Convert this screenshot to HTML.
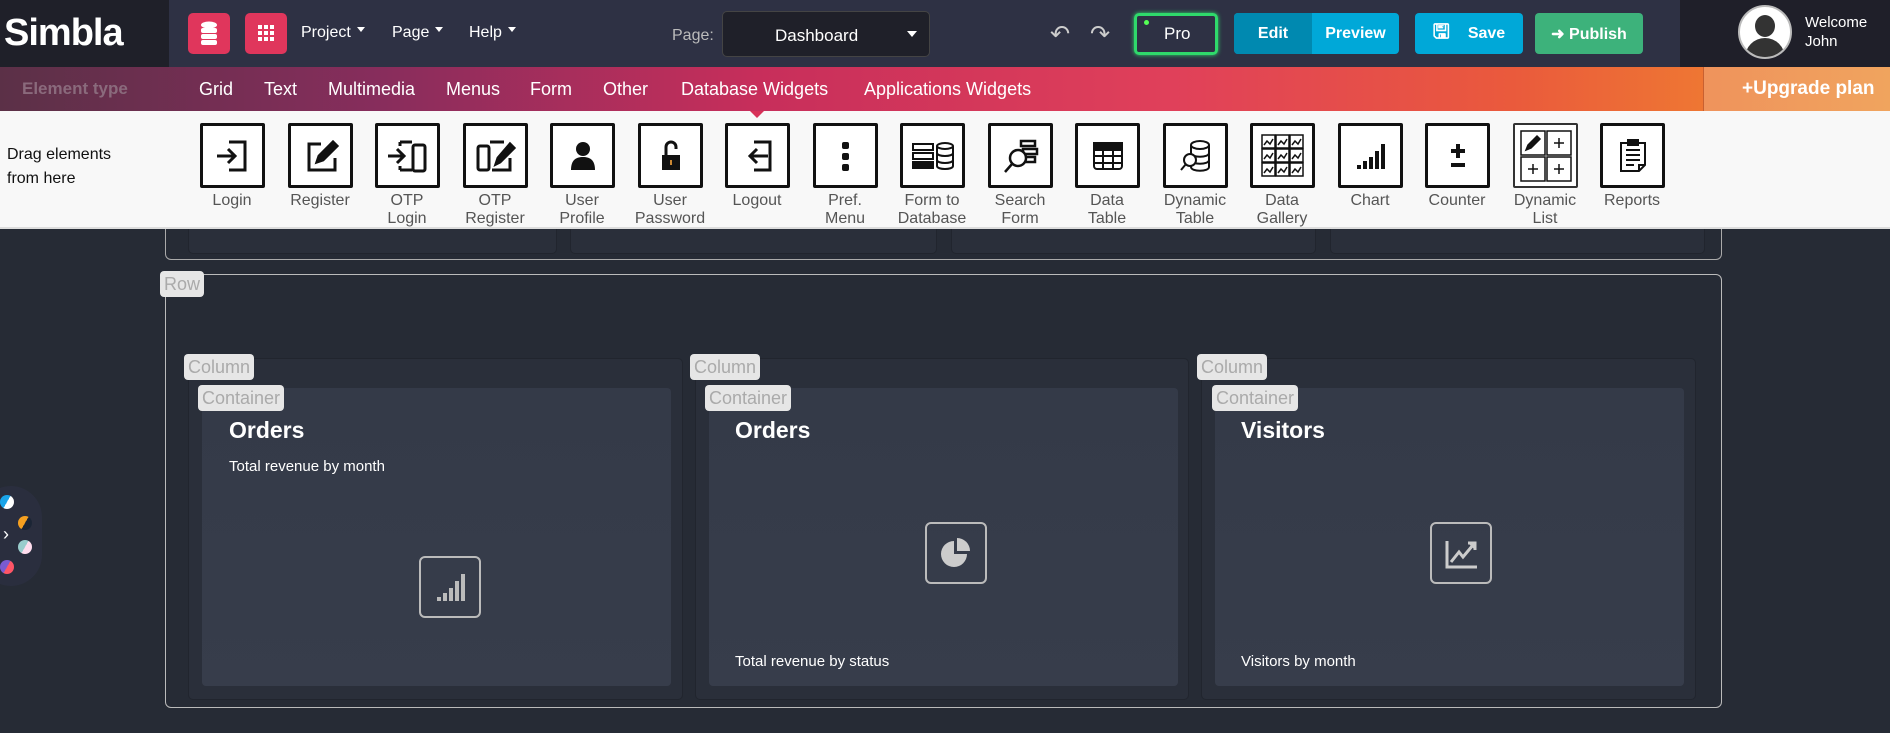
<!DOCTYPE html>
<html><head><meta charset="utf-8"><style>
*{box-sizing:border-box;margin:0;padding:0}
body{width:1890px;height:733px;overflow:hidden;background:#262b35;font-family:"Liberation Sans",sans-serif;position:relative}
.abs{position:absolute}
#hdr{left:0;top:0;width:1890px;height:67px;background:#2e3144}
#logo{left:0;top:0;width:169px;height:67px;background:#1f2029;color:#fff;font-size:38px;font-weight:bold;padding:12px 0 0 4px;letter-spacing:-1px}
.rb{background:#e0365c;border-radius:5px;width:42px;height:41px;top:13px}
.nav{color:#fff;font-size:16px;top:24px}
.nav:after{content:"";display:inline-block;margin-left:6px;border:4px solid transparent;border-top:5px solid #fff;vertical-align:1px}
.btn{top:13px;height:41px;border-radius:4px;color:#fff;font-size:16px;font-weight:bold;display:flex;align-items:center;justify-content:center}
#pink{left:0;top:67px;width:1890px;height:44px;background:linear-gradient(90deg,#5b3047 0%,#872d5c 20%,#c72e5b 40%,#e0405a 62%,#ea5a3c 80%,#ee7633 90%)}
.pi{color:#fff;font-size:18px;top:79px}
#tool{left:0;top:111px;width:1890px;height:118px;background:#f8f8f8;border-bottom:2px solid #ddd}
.tile{top:123px;width:65px;height:65px;border:3px solid #111;border-radius:2px;background:#fff;display:flex;align-items:center;justify-content:center}
.lbl{top:192px;width:90px;text-align:center;font-size:16px;line-height:18px;color:#555}
.tag{background:#e6e6e6;color:#aaa;font-size:18px;border-radius:4px;padding:2px 4px;line-height:22px}
.col{background:#2a2f3a;border:1px solid #21252e;border-radius:5px}
.cont{background:linear-gradient(180deg,#343a48,#373d4b);border-radius:4px}
.t1{color:#fff;font-size:23px;font-weight:bold}
.t2{color:#fff;font-size:15px}
.ib{width:62px;height:62px;border:2px solid #bbb;border-radius:6px;display:flex;align-items:center;justify-content:center}
</style></head><body>
<div id="hdr" class="abs"></div>
<!-- upper remnant row -->
<div class="abs" style="left:165px;top:200px;width:1557px;height:60px;border:1px solid #aaa;border-top:none;border-radius:0 0 6px 6px"></div>
<div class="abs col" style="left:188px;top:200px;width:369px;height:54px"></div>
<div class="abs col" style="left:570px;top:200px;width:367px;height:54px"></div>
<div class="abs col" style="left:951px;top:200px;width:365px;height:54px"></div>
<div class="abs col" style="left:1330px;top:200px;width:375px;height:54px"></div>

<div id="logo" class="abs">Simbla</div>
<div class="abs rb" style="left:188px"><svg width="42" height="41" viewBox="0 0 42 41"><g fill="#fff"><ellipse cx="21" cy="12" rx="8" ry="3.5"/><rect x="13" y="15" width="16" height="5" rx="2"/><rect x="13" y="21" width="16" height="5" rx="2"/><rect x="13" y="27" width="16" height="5" rx="2"/></g></svg></div>
<div class="abs rb" style="left:245px"><svg width="42" height="41"><g fill="#fff"><rect x="13" y="12" width="4" height="4"/><rect x="19" y="12" width="4" height="4"/><rect x="25" y="12" width="4" height="4"/><rect x="13" y="18" width="4" height="4"/><rect x="19" y="18" width="4" height="4"/><rect x="25" y="18" width="4" height="4"/><rect x="13" y="24" width="4" height="4"/><rect x="19" y="24" width="4" height="4"/><rect x="25" y="24" width="4" height="4"/></g></svg></div>
<div class="abs nav" style="left:301px">Project</div>
<div class="abs nav" style="left:392px">Page</div>
<div class="abs nav" style="left:469px">Help</div>
<div class="abs" style="left:672px;top:27px;color:#bbb;font-size:16px">Page:</div>
<div class="abs" style="left:722px;top:11px;width:208px;height:46px;background:#1f2029;border:1px solid #444;border-radius:5px;color:#fff;font-size:17px;padding:14px 0 0 52px">Dashboard<span style="position:absolute;right:12px;top:19px;border:5px solid transparent;border-top:6px solid #fff"></span></div>
<div class="abs" style="left:1050px;top:20px;color:#ccc;font-size:24px">&#x21B6;</div>
<div class="abs" style="left:1090px;top:20px;color:#ccc;font-size:24px">&#x21B7;</div>
<div class="abs" style="left:1134px;top:13px;width:84px;height:42px;border:3px solid #2fd96b;border-radius:5px;color:#fff;font-size:17px;padding:8px 0 0 27px;box-shadow:0 0 4px #2fd96b">Pro<span style="position:absolute;left:7px;top:4px;width:5px;height:5px;background:#5f5;border-radius:50%"></span></div>
<div class="abs btn" style="left:1234px;width:165px;background:#00a8d8"></div>
<div class="abs btn" style="left:1234px;width:78px;background:#0089b0;border-radius:4px 0 0 4px">Edit</div>
<div class="abs btn" style="left:1312px;width:87px">Preview</div>
<div class="abs btn" style="left:1415px;width:108px;background:#00a8d8"><span style="font-size:20px;margin-right:18px">&#x1F5AB;</span>Save</div>
<div class="abs btn" style="left:1535px;width:108px;background:#3db27b">&#x279C;&nbsp;Publish</div>
<div class="abs" style="left:1680px;top:0;width:210px;height:67px;background:#1f1f29"></div>
<div class="abs" style="left:1738px;top:5px;width:54px;height:54px;border-radius:50%;background:#fff;overflow:hidden;border:2px solid #bbb"><div class="abs" style="left:15px;top:8px;width:20px;height:22px;border-radius:50%;background:#333"></div><div class="abs" style="left:5px;top:31px;width:40px;height:30px;border-radius:20px 20px 0 0;background:#333"></div></div>
<div class="abs" style="left:1805px;top:13px;color:#fff;font-size:15px;line-height:19px">Welcome<br>John</div>
<div id="pink" class="abs"></div>
<div class="abs" style="left:1703px;top:67px;width:187px;height:44px;background:linear-gradient(90deg,#ef935c,#f0a45e);border-left:1px solid #c86030"></div>
<div class="abs" style="left:1742px;top:78px;color:#fff;font-size:19px;font-weight:bold">+Upgrade plan</div>
<div class="abs pi" style="left:22px;color:#8a6a7c;font-weight:bold;font-size:17px">Element type</div>
<div class="abs pi" style="left:199px">Grid</div>
<div class="abs pi" style="left:264px">Text</div>
<div class="abs pi" style="left:328px">Multimedia</div>
<div class="abs pi" style="left:446px">Menus</div>
<div class="abs pi" style="left:530px">Form</div>
<div class="abs pi" style="left:603px">Other</div>
<div class="abs pi" style="left:681px">Database Widgets</div>
<div class="abs pi" style="left:864px">Applications Widgets</div>
<div id="tool" class="abs"></div>
<div class="abs" style="left:750px;top:111px;border:7px solid transparent;border-top:7px solid #d83158"></div>
<div class="abs" style="left:7px;top:143px;font-size:16px;line-height:24px;color:#111">Drag elements<br>from here</div>

<div class="abs tile" style="left:200px"><svg width="40" height="40" viewBox="0 0 40 40" fill="none" stroke="#111" stroke-width="3"><path d="M16 6h16v28H16M4 20h18M15 13l7 7-7 7"/></svg></div>
<div class="abs tile" style="left:288px"><svg width="40" height="40" viewBox="0 0 40 40" fill="none" stroke="#111" stroke-width="3"><path d="M20 8H8v26h26V22"/><path d="M16 26l2-6 14-14 4 4-14 14z" fill="#111"/></svg></div>
<div class="abs tile" style="left:375px"><svg width="44" height="40" viewBox="0 0 44 40" fill="none" stroke="#111" stroke-width="3"><path d="M14 6h12M14 34h12M14 6v4M14 30v4M2 20h16M11 13l7 7-7 7"/><rect x="27" y="9" width="12" height="26" rx="2"/></svg></div>
<div class="abs tile" style="left:463px"><svg width="44" height="40" viewBox="0 0 44 40" fill="none" stroke="#111" stroke-width="3"><rect x="4" y="10" width="11" height="24" rx="2"/><path d="M16 6h14M18 34h18V22"/><path d="M22 28l2-6 12-14 4 4-14 14z" fill="#111"/></svg></div>
<div class="abs tile" style="left:550px"><svg width="40" height="40" viewBox="0 0 40 40" fill="#111"><circle cx="20" cy="13" r="7"/><path d="M8 34c0-10 5-13 12-13s12 3 12 13z"/></svg></div>
<div class="abs tile" style="left:638px"><svg width="40" height="40" viewBox="0 0 40 40"><path d="M15 19v-8a5 5 0 0 1 10 0v2" fill="none" stroke="#111" stroke-width="3"/><rect x="11" y="19" width="18" height="15" fill="#111"/><rect x="19" y="24" width="2" height="5" fill="#c83"/></svg></div>
<div class="abs tile" style="left:725px"><svg width="40" height="40" viewBox="0 0 40 40" fill="none" stroke="#111" stroke-width="3"><path d="M16 6h16v28H16M30 20H12M19 13l-7 7 7 7"/></svg></div>
<div class="abs tile" style="left:813px"><svg width="40" height="40" fill="#111"><rect x="16" y="6" width="7" height="7" rx="2"/><rect x="16" y="17" width="7" height="7" rx="2"/><rect x="16" y="28" width="7" height="7" rx="2"/></svg></div>
<div class="abs tile" style="left:900px"><svg width="44" height="40" viewBox="0 0 44 40" fill="none" stroke="#111" stroke-width="2"><rect x="2" y="8" width="20" height="6"/><rect x="2" y="17" width="20" height="6"/><rect x="2" y="26" width="20" height="6" fill="#111"/><ellipse cx="34" cy="10" rx="8" ry="3"/><path d="M26 10v20c0 4 16 4 16 0V10M26 17c0 4 16 4 16 0M26 24c0 4 16 4 16 0"/></svg></div>
<div class="abs tile" style="left:988px"><svg width="40" height="40" fill="none" stroke="#111" stroke-width="2.5"><rect x="20" y="5" width="14" height="5"/><rect x="22" y="13" width="14" height="5"/><rect x="22" y="21" width="12" height="5"/><circle cx="17" cy="22" r="8" fill="#fff"/><path d="M11 28l-7 8"/></svg></div>
<div class="abs tile" style="left:1075px"><svg width="40" height="40" fill="none" stroke="#111" stroke-width="2"><rect x="6" y="7" width="28" height="26" rx="3"/><rect x="6" y="7" width="28" height="7" fill="#111"/><path d="M6 20h28M6 27h28M15 14v19M25 14v19"/></svg></div>
<div class="abs tile" style="left:1163px"><svg width="40" height="40" fill="none" stroke="#111" stroke-width="2"><ellipse cx="24" cy="9" rx="9" ry="4"/><path d="M15 9v22c0 5 18 5 18 0V9M15 17c0 5 18 5 18 0M15 24c0 5 18 5 18 0"/><circle cx="14" cy="24" r="6" fill="#fff"/><path d="M10 28l-5 6"/></svg></div>
<div class="abs tile" style="left:1250px"><svg width="48" height="48" fill="none" stroke="#111" stroke-width="1.5"><g id="g"><rect x="3" y="3" width="13" height="13"/><path d="M5 13l3-4 3 3 3-5"/></g><use href="#g" x="14"/><use href="#g" x="28"/><use href="#g" y="14"/><use href="#g" x="14" y="14"/><use href="#g" x="28" y="14"/><use href="#g" y="28"/><use href="#g" x="14" y="28"/><use href="#g" x="28" y="28"/></svg></div>
<div class="abs tile" style="left:1338px"><svg width="40" height="40" fill="#111"><rect x="6" y="29" width="4" height="4"/><rect x="12" y="25" width="4" height="8"/><rect x="18" y="21" width="4" height="12"/><rect x="24" y="15" width="4" height="18"/><rect x="30" y="8" width="4" height="25"/></svg></div>
<div class="abs tile" style="left:1425px"><svg width="40" height="40" fill="#111"><rect x="18" y="8" width="4" height="14"/><rect x="13" y="13" width="14" height="4"/><rect x="13" y="27" width="14" height="4"/></svg></div>
<div class="abs tile" style="left:1513px;border-width:2px;border-color:#333"><svg width="56" height="56" fill="none" stroke="#111" stroke-width="1.5"><rect x="3" y="3" width="24" height="24"/><rect x="29" y="3" width="24" height="24"/><rect x="3" y="29" width="24" height="24"/><rect x="29" y="29" width="24" height="24"/><path d="M8 22l2-5 9-9 3 3-9 9z" fill="#111"/><path d="M41 10v10M36 15h10M15 36v10M10 41h10M41 36v10M36 41h10"/></svg></div>
<div class="abs tile" style="left:1600px"><svg width="40" height="40" fill="none" stroke="#111" stroke-width="2"><path d="M8 7h24v22l-6 6H8z"/><path d="M26 35v-6h6"/><rect x="15" y="4" width="10" height="5" fill="#111"/><path d="M13 14h14M13 19h14M13 24h14M13 29h8"/></svg></div>

<div class="abs lbl" style="left:187px">Login</div>
<div class="abs lbl" style="left:275px">Register</div>
<div class="abs lbl" style="left:362px">OTP<br>Login</div>
<div class="abs lbl" style="left:450px">OTP<br>Register</div>
<div class="abs lbl" style="left:537px">User<br>Profile</div>
<div class="abs lbl" style="left:625px">User<br>Password</div>
<div class="abs lbl" style="left:712px">Logout</div>
<div class="abs lbl" style="left:800px">Pref.<br>Menu</div>
<div class="abs lbl" style="left:887px">Form to<br>Database</div>
<div class="abs lbl" style="left:975px">Search<br>Form</div>
<div class="abs lbl" style="left:1062px">Data<br>Table</div>
<div class="abs lbl" style="left:1150px">Dynamic<br>Table</div>
<div class="abs lbl" style="left:1237px">Data<br>Gallery</div>
<div class="abs lbl" style="left:1325px">Chart</div>
<div class="abs lbl" style="left:1412px">Counter</div>
<div class="abs lbl" style="left:1500px">Dynamic<br>List</div>
<div class="abs lbl" style="left:1587px">Reports</div>

<!-- row -->
<div class="abs" style="left:165px;top:274px;width:1557px;height:434px;border:1px solid #bbb;border-radius:6px"></div>
<div class="abs tag" style="left:160px;top:271px">Row</div>

<div class="abs col" style="left:188px;top:358px;width:495px;height:342px"></div>
<div class="abs col" style="left:695px;top:358px;width:494px;height:342px"></div>
<div class="abs col" style="left:1201px;top:358px;width:495px;height:342px"></div>

<div class="abs cont" style="left:202px;top:388px;width:469px;height:298px"></div>
<div class="abs cont" style="left:709px;top:388px;width:469px;height:298px"></div>
<div class="abs cont" style="left:1215px;top:388px;width:469px;height:298px"></div>

<div class="abs tag" style="left:184px;top:354px">Column</div>
<div class="abs tag" style="left:690px;top:354px">Column</div>
<div class="abs tag" style="left:1197px;top:354px">Column</div>
<div class="abs tag" style="left:198px;top:385px">Container</div>
<div class="abs tag" style="left:705px;top:385px">Container</div>
<div class="abs tag" style="left:1212px;top:385px">Container</div>

<div class="abs t1" style="left:229px;top:417px">Orders</div>
<div class="abs t2" style="left:229px;top:458px">Total revenue by month</div>
<div class="abs ib" style="left:419px;top:556px"><svg width="40" height="40" fill="#bbb"><rect x="7" y="30" width="4" height="4"/><rect x="13" y="26" width="4" height="8"/><rect x="19" y="21" width="4" height="13"/><rect x="25" y="14" width="4" height="20"/><rect x="31" y="7" width="4" height="27"/></svg></div>

<div class="abs t1" style="left:735px;top:417px">Orders</div>
<div class="abs ib" style="left:925px;top:522px"><svg width="40" height="40" fill="#ccc"><path d="M18 8a13 13 0 1 0 13 13H18z"/><path d="M21 5v13h13A13 13 0 0 0 21 5z"/></svg></div>
<div class="abs t2" style="left:735px;top:653px">Total revenue by status</div>

<div class="abs t1" style="left:1241px;top:417px">Visitors</div>
<div class="abs ib" style="left:1430px;top:522px"><svg width="40" height="40" fill="none" stroke="#ccc" stroke-width="3"><path d="M6 8v26h30"/><path d="M10 29l8-10 4 5 10-12"/><path d="M27 10h7v7" fill="#ccc"/></svg></div>
<div class="abs t2" style="left:1241px;top:653px">Visitors by month</div>

<!-- left floating -->
<div class="abs" style="left:-20px;top:486px;width:62px;height:100px;border-radius:31px;background:#2a2e3e"></div>
<div class="abs" style="left:0;top:495px;width:14px;height:14px;border-radius:50%;background:linear-gradient(120deg,#1aa3e8 50%,#fff 50%)"></div>
<div class="abs" style="left:18px;top:516px;width:14px;height:14px;border-radius:50%;background:linear-gradient(120deg,#f5a020 50%,#1b2535 50%)"></div>
<div class="abs" style="left:18px;top:540px;width:14px;height:14px;border-radius:50%;background:linear-gradient(120deg,#9cc 50%,#fde 50%)"></div>
<div class="abs" style="left:0;top:560px;width:14px;height:14px;border-radius:50%;background:linear-gradient(120deg,#7a5bd0 50%,#f56 50%)"></div>
<div class="abs" style="left:3px;top:524px;color:#fff;font-size:18px">&#x203A;</div>
</body></html>
